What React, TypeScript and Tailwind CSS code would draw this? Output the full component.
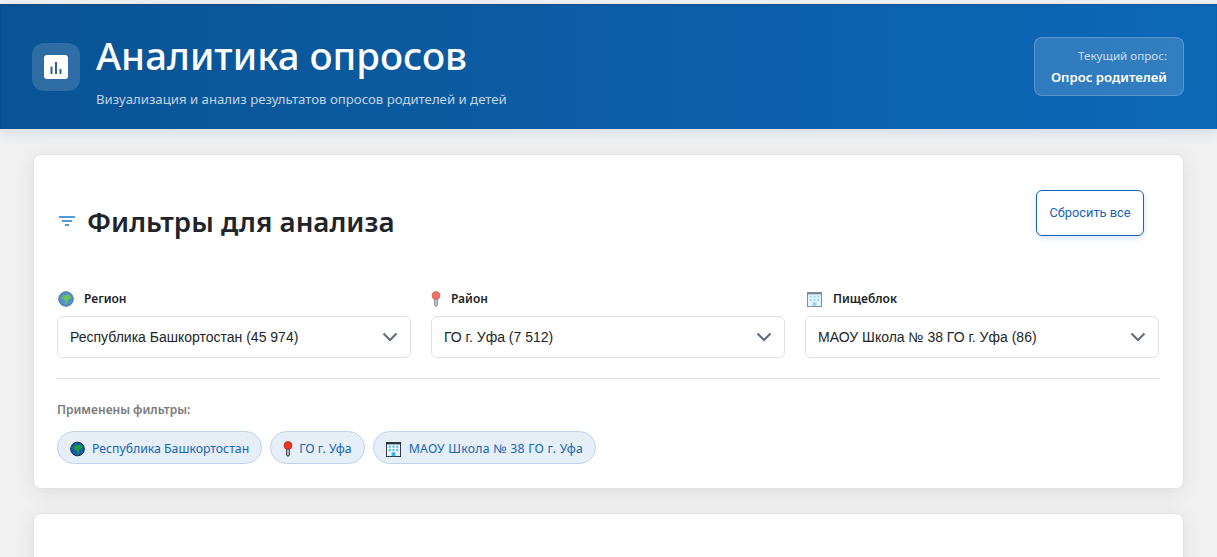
function GlobeIcon({ dark, className }: { dark?: boolean; className?: string }) {
  return (
    <svg width="16" height="16" viewBox="0 0 16 16" className={`shrink-0 ${className ?? ""}`}>
      <circle cx="8" cy="8" r="7.3" fill={dark ? "#0b5fae" : "#4a93d9"} stroke={dark ? "#1c2733" : "#6b7280"} strokeWidth="1" />
      <path d="M5 4.5 L11 3.5 L13.5 6.5 L10 9 L9 13 L7.5 13 L7 9.5 L3.5 7.5 Z" fill={dark ? "#1f9d3a" : "#6fbf5a"} />
    </svg>
  );
}

function PinIcon({ dark, className }: { dark?: boolean; className?: string }) {
  return (
    <svg width="10" height="16" viewBox="0 0 10 16" className={`shrink-0 ${className ?? ""}`}>
      <path d="M3.8 8 V14.5 Q5 15.8 6.2 14.5 V8" fill={dark ? "#f3f4f6" : "#e5e7eb"} stroke={dark ? "#111827" : "#6b7280"} strokeWidth="1" />
      <circle cx="5" cy="4.5" r="4" fill={dark ? "#e8351f" : "#f0715f"} stroke={dark ? "#7f1d1d" : "#b9564a"} strokeWidth="0.5" />
    </svg>
  );
}

function BuildingIcon({ dark, className }: { dark?: boolean; className?: string }) {
  const line = dark ? "#27323f" : "#7b8794";
  const win = dark ? "#35b5ee" : "#8fd8f7";
  return (
    <svg width="15" height="15" viewBox="0 0 16 16" className={`shrink-0 ${className ?? ""}`}>
      <rect x="0.5" y="0.5" width="15" height="15" fill="#e8f3fa" stroke={line} />
      <rect x="0.5" y="0.5" width="15" height="2" fill={line} />
      <g fill={win}>
        <rect x="3" y="4" width="2" height="2" />
        <rect x="7" y="4" width="2" height="2" />
        <rect x="11" y="4" width="2" height="2" />
        <rect x="3" y="7.5" width="2" height="2" />
        <rect x="7" y="7.5" width="2" height="2" />
        <rect x="11" y="7.5" width="2" height="2" />
        <rect x="6" y="11" width="4" height="4" />
      </g>
    </svg>
  );
}

function FilterIcon() {
  return (
    <svg width="16" height="10" viewBox="0 0 16 10" className="ml-[2px] shrink-0">
      <path d="M0 1 H16 M3 5 H13 M6 9 H10" stroke="#1a78cc" strokeWidth="1.5" fill="none" />
    </svg>
  );
}

function Chevron() {
  return (
    <svg width="16" height="10" viewBox="0 0 16 10" className="shrink-0">
      <path d="M1.5 1.5 L8 8 L14.5 1.5" stroke="#5f6b7a" strokeWidth="2" fill="none" />
    </svg>
  );
}

function LogoMark() {
  return (
    <div className="flex h-6 w-6 items-center justify-center rounded-[3px] bg-white">
      <svg width="14" height="14" viewBox="0 0 14 14">
        <path d="M1.5 6.5 H3.5 V14 H1.5 Z M6 2 H8 V14 H6 Z M10.5 9 H12.5 V14 H10.5 Z" fill="#2a64a0" />
      </svg>
    </div>
  );
}

const selects = [
  { label: "Регион", value: "Республика Башкортостан (45 974)", icon: <GlobeIcon className="ml-px" />, gap: "gap-[10px]" },
  { label: "Район", value: "ГО г. Уфа (7 512)", icon: <PinIcon />, gap: "gap-[10px]" },
  { label: "Пищеблок", value: "МАОУ Школа № 38 ГО г. Уфа (86)", icon: <BuildingIcon className="ml-[2px]" />, gap: "gap-[11px]" },
];

export default function App() {
  return (
    <div className="h-[557px] overflow-hidden bg-[#f1f1f1] pt-1 font-['Noto_Sans','Open_Sans',sans-serif]">
      <header className="flex h-[125px] items-center justify-between bg-gradient-to-r from-[#0a5394] to-[#0d68b8] pr-[33px] pl-8 shadow-[0_4px_12px_rgba(10,83,148,0.12),inset_0_1px_2px_rgba(0,0,0,0.2)]">
        <div className="flex items-center gap-4">
          <div className="flex h-12 w-12 items-center justify-center rounded-xl bg-white/15">
            <LogoMark />
          </div>
          <div className="pt-1">
            <h1 className="text-[38.4px] leading-[50px] font-medium text-white">Аналитика опросов</h1>
            <p className="mt-[10px] text-[13.2px] leading-[18px] text-white/75">
              Визуализация и анализ результатов опросов родителей и детей
            </p>
          </div>
        </div>
        <div className="flex h-[59px] w-[150px] flex-col items-end justify-center rounded-lg border border-white/20 bg-white/15 pr-4">
          <span className="text-[11.6px] leading-[18px] text-white/75">Текущий опрос:</span>
          <span className="mt-[3px] text-[13.2px] leading-[18px] font-semibold text-white">Опрос родителей</span>
        </div>
      </header>

      <main className="mx-[33px] mt-[25px]">
        <section className="h-[335px] rounded-lg border border-[#e2e2e2] bg-white pr-6 pl-[23px] shadow-[0_4px_20px_rgba(0,0,0,0.08)]">
          <div className="flex h-[135px] items-start justify-between">
            <div className="mt-[46px] flex items-center gap-3">
              <FilterIcon />
              <h2 className="text-[27.7px] leading-[40px] font-semibold text-[#212529]">Фильтры для анализа</h2>
            </div>
            <button className="mt-[35px] mr-[15px] h-[46px] w-[108px] rounded-md border border-[#1565b4] bg-white font-['Roboto',sans-serif] text-[12.8px] text-[#1565b4] shadow-[0_2px_6px_rgba(21,101,180,0.18)]">
              Сбросить все
            </button>
          </div>

          <div className="grid grid-cols-3 gap-5">
            {selects.map((item) => (
              <div key={item.label}>
                <div className={`flex h-[18px] items-center text-[12px] font-semibold text-[#212529] ${item.gap}`}>
                  {item.icon}
                  <span>{item.label}</span>
                </div>
                <div className="mt-[8px] flex h-[42px] items-center justify-between rounded-md border border-[#dee2e6] bg-white pr-[12px] pl-3 font-['Liberation_Sans',sans-serif] text-[14px] text-[#212529]">
                  <span>{item.value}</span>
                  <Chevron />
                </div>
              </div>
            ))}
          </div>

          <div className="mt-5 border-t border-[#dee2e6] pt-[22px]">
            <p className="text-[12px] leading-[18px] font-semibold text-[#7a7a7a]">Применены фильтры:</p>
            <div className="mt-[12px] flex gap-2 text-[12.25px] text-[#1565b4]">
              <span className="flex h-[33px] items-center gap-[7px] rounded-full border border-[#bdd3ea] bg-[#e6eef8] px-3 pt-[3px]">
                <GlobeIcon dark className="w-[15px]" />
                Республика Башкортостан
              </span>
              <span className="flex h-[33px] items-center gap-[6px] rounded-full border border-[#bdd3ea] bg-[#e6eef8] px-3 pt-[3px]">
                <PinIcon dark />
                ГО г. Уфа
              </span>
              <span className="flex h-[33px] items-center gap-[8px] rounded-full border border-[#bdd3ea] bg-[#e6eef8] px-3 pt-[3px] tracking-[0.27px]">
                <BuildingIcon dark />
                <span>
                  МАОУ Школа <span className="font-['Liberation_Sans',sans-serif]">№</span> 38 ГО г. Уфа
                </span>
              </span>
            </div>
          </div>
        </section>

        <section className="mt-[24px] h-[200px] rounded-lg border border-[#e2e2e2] bg-white shadow-[0_4px_20px_rgba(0,0,0,0.08)]" />
      </main>
    </div>
  );
}
